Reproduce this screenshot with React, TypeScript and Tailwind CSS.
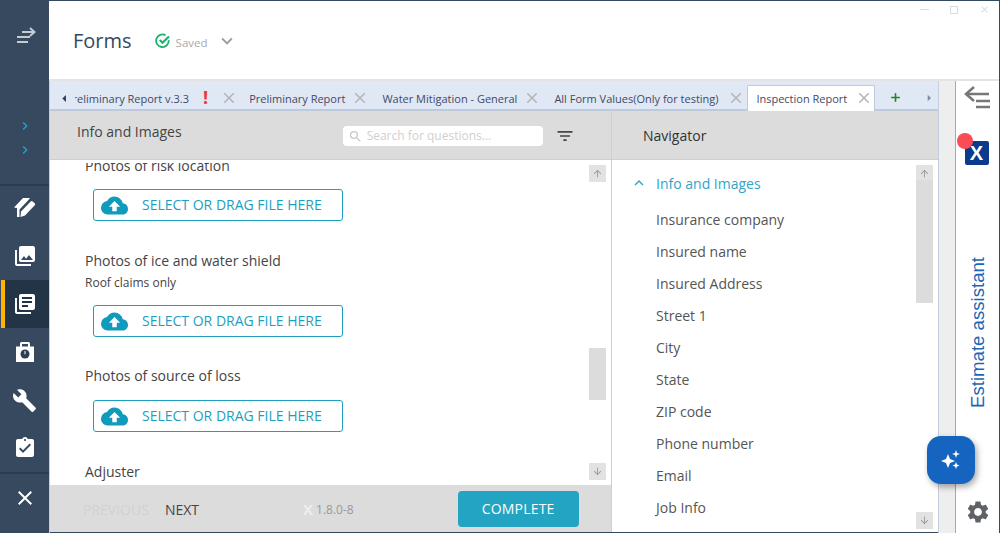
import { MdArrowDownward, MdArrowUpward, MdAssignmentTurnedIn, MdBuild, MdClose, MdCloudUpload, MdCollections, MdExpandLess, MdExpandMore, MdFilterList, MdLibraryBooks, MdSearch, MdSettings, MdChevronRight, MdArrowLeft, MdArrowRight } from 'react-icons/md';
import { Plus } from 'lucide-react';

const navItems = ['Insurance company', 'Insured name', 'Insured Address', 'Street 1', 'City', 'State', 'ZIP code', 'Phone number', 'Email', 'Job Info'];

function TabClose({ className }: { className?: string }) {
  return <MdClose size={18} className={'text-[#b5b5b5] -mt-[3px] shrink-0 ' + (className ?? 'ml-[6px]')} />;
}

function UploadBox() {
  return (
    <div className="ml-[8px] flex h-[32px] w-[250px] items-center rounded-[3px] border border-[#1c9fc0] text-[14px] text-[#1c9fc0]">
      <MdCloudUpload size={27} className="ml-[7px] text-[#109bbd]" />
      <span className="ml-[14px] -mt-[2px]">SELECT OR DRAG FILE HERE</span>
    </div>
  );
}

function Scrollbar({ top, height, bottom }: { top: number; height: number; bottom: number }) {
  return (
    <div className="relative mr-[5px] mt-[5px] w-[17px] shrink-0">
      <div className="flex h-[17px] items-center justify-center bg-[#e2e2e2] text-[#9a9a9a]"><MdArrowUpward size={11} /></div>
      <div className="absolute left-0 w-[17px] bg-[#dcdcdc]" style={{ top, height }} />
      <div className="absolute left-0 flex h-[17px] w-[17px] items-center justify-center bg-[#e2e2e2] text-[#9a9a9a]" style={{ top: bottom }}><MdArrowDownward size={11} /></div>
    </div>
  );
}

function SideIcon({ children, active }: { children: React.ReactNode; active?: boolean }) {
  return (
    <div className={active ? 'flex h-[48px] items-center justify-center border-l-[4px] border-[#ffb300] bg-[#233446] ml-[1px] pr-[5px] text-white' : 'flex h-[48px] items-center justify-center text-white'}>
      {children}
    </div>
  );
}

export default function App() {
  return (
    <div className="flex h-[533px] w-[1000px] overflow-hidden border-t border-r border-[#34495e] bg-white text-[#444] font-['Open_Sans',sans-serif]">
      {/* left rail */}
      <aside className="flex w-[49px] shrink-0 flex-col bg-[#36495e]">
        <div className="flex h-[66px] items-center justify-center">
          <svg width="22" height="18" viewBox="0 0 22 18" fill="none" stroke="#c3cbd3" strokeWidth="2">
            <path d="M3 12h13M3 17h11" />
            <path d="M8 7h12M16 3l4.5 4-4.5 4" />
          </svg>
        </div>
        <div className="mt-[51px] flex flex-col items-center gap-[8px] text-[#1fa8d1]">
          <MdChevronRight size={16} />
          <MdChevronRight size={16} />
        </div>
        <div className="mt-[26px] h-[2px] bg-[#2b3c4f]" />
        <div className="-mt-[2px] flex flex-col">
          <SideIcon>
            <svg width="24" height="24" viewBox="0 0 24 24" fill="#fff">
              <path d="M1 11.5 10 2h7l-2 2.5L6.5 13.5V21H4V12z" />
              <path d="M8 15.5 17.7 5.5a1.4 1.4 0 0 1 2 0l2 1.8a1.4 1.4 0 0 1 0 2L12 19.5 7.5 21z" />
            </svg>
          </SideIcon>
          <SideIcon><MdCollections size={24} /></SideIcon>
          <SideIcon active><MdLibraryBooks size={24} /></SideIcon>
          <SideIcon>
            <svg width="24" height="24" viewBox="0 0 24 24" fill="#fff">
              <path d="M7 7V3.5A1.5 1.5 0 0 1 8.5 2h7A1.5 1.5 0 0 1 17 3.5V7h-2V4H9v3z" />
              <rect x="3" y="6.5" width="18" height="15.5" />
              <circle cx="12" cy="14" r="4.5" fill="#2c3e50" />
              <path d="M11.5 11h1v3.2h-1z" fill="#fff" />
            </svg>
          </SideIcon>
          <SideIcon><MdBuild size={25} /></SideIcon>
          <SideIcon><MdAssignmentTurnedIn size={24} /></SideIcon>
        </div>
        <div className="h-[2px] bg-[#2b3c4f]" />
        <div className="flex h-[48px] items-center justify-center text-white"><MdClose size={24} /></div>
      </aside>

      <div className="flex min-w-0 flex-1 flex-col">
        {/* title bar */}
        <header className="relative flex h-[80px] shrink-0 items-center border-b-2 border-[#e4e4e4] pt-[2px] pl-[24px]">
          <h1 className="text-[20px] leading-none text-[#34495e]">Forms</h1>
          <svg className="ml-[23px]" width="16" height="16" viewBox="0 0 16 16" fill="none">
            <path d="M13.7 7.2A6.3 6.3 0 1 1 10.6 2.3" stroke="#19b26b" strokeWidth="1.8" />
            <path d="M4.8 7 7.5 9.8 14 3.5" stroke="#19b26b" strokeWidth="2.2" />
          </svg>
          <span className="ml-[5px] mt-[4px] text-[11.5px] text-[#aaa]">Saved</span>
          <MdExpandMore size={22} className="ml-[8px] text-[#9e9e9e]" />
          <div className="absolute right-[9px] top-[3px] flex items-center gap-[21px] text-[#d5dde4]">
            <div className="h-px w-[9px] bg-[#d5dde4]" />
            <div className="h-[8px] w-[8px] border border-[#d5dde4]" />
            <MdClose size={11} />
          </div>
        </header>

        <div className="flex min-h-0 flex-1">
          <div className="flex min-w-0 w-[890px] shrink-0 flex-col border-x border-[#c3cede]">
            {/* tab strip */}
            <div className="flex h-[30px] shrink-0 items-start border-b-2 border-[#bccadc] bg-[#dfe8f4] text-[11px] text-[#3f4a66]">
              <div className="flex h-[28px] w-[25px] shrink-0 items-center justify-end pr-[2px] pt-[6px] text-[#2c3e50]"><MdArrowLeft size={17} /></div>
              <div className="-mb-[2px] flex h-[30px] w-[845px] shrink-0 items-center overflow-hidden whitespace-nowrap">
                <div className="-ml-[9px] mt-[6px] flex shrink-0 items-center pr-[11px]">
                  <span>Preliminary Report v.3.3</span>
                  <span className="ml-[14px] -mt-[4px] text-[18px] font-bold leading-none text-[#f4362c]">!</span>
                  <TabClose className="ml-[12px]" />
                </div>
                <div className="mt-[6px] flex shrink-0 items-center pr-[13px]"><span>Preliminary Report</span><TabClose /></div>
                <div className="mt-[6px] flex shrink-0 items-center pr-[13px]"><span>Water Mitigation - General</span><TabClose /></div>
                <div className="mt-[6px] flex shrink-0 items-center pr-[2px]"><span className="w-[167px]">All Form Values(Only for testing)</span><TabClose /></div>
                <div className="mt-[4px] flex h-[26px] shrink-0 items-center rounded-t-[2px] border border-b-0 border-[#bccadc] bg-white pl-[8px] pr-[1px] pt-[1px]"><span>Inspection Report</span><TabClose className="ml-[8px]" /></div>
                <Plus size={13} strokeWidth={3} className="ml-[14px] mt-[2px] shrink-0 text-[#1e8c1e]" />
              </div>
              <div className="flex h-[28px] flex-1 items-center justify-center pt-[6px] text-[#7d8ea6]"><MdArrowRight size={16} /></div>
            </div>

            <div className="flex min-h-0 flex-1">
              {/* form panel */}
              <section className="flex w-[562px] shrink-0 flex-col border-r border-[#c9d0da]">
                <div className="flex h-[49px] shrink-0 items-start border-b border-[#c9d0da] bg-[#dcdcdc]">
                  <h2 className="ml-[27px] mt-[10px] text-[14px] text-[#444]">Info and Images</h2>
                  <div className="ml-[161px] mt-[15px] flex h-[20px] w-[200px] items-center rounded-[4px] bg-white pl-[5px] text-[12px] text-[#d0d0d0]">
                    <MdSearch size={15} className="text-[#c8c8c8]" />
                    <span className="ml-[4px]">Search for questions...</span>
                  </div>
                  <MdFilterList size={20} className="ml-[12px] mt-[15px] text-[#444]" />
                </div>
                <div className="relative flex min-h-0 flex-1 overflow-hidden">
                  <div className="absolute inset-x-0 top-0 h-[3px] bg-white" />
                  <div className="min-w-0 flex-1 pl-[35px] text-[14px] text-[#444]">
                    <div className="-mt-[4px] h-[20px] leading-[20px]">Photos of risk location</div>
                    <div className="mt-[13px]"><UploadBox /></div>
                    <div className="mt-[30px] h-[20px] leading-[20px]">Photos of ice and water shield</div>
                    <div className="mt-[4px] h-[16px] text-[12px] leading-[16px]">Roof claims only</div>
                    <div className="mt-[14px]"><UploadBox /></div>
                    <div className="mt-[29px] h-[20px] leading-[20px]">Photos of source of loss</div>
                    <div className="mt-[14px]"><UploadBox /></div>
                    <div className="mt-[30px] h-[20px] leading-[20px]">Adjuster</div>
                  </div>
                  <Scrollbar top={183} height={52} bottom={298} />
                </div>
                <div className="flex h-[47px] shrink-0 items-center bg-[#dcdcdc] text-[14px]">
                  <span className="ml-[33px] mt-[2px] text-[#d2d2d2]">PREVIOUS</span>
                  <span className="ml-[16px] mt-[2px] text-[#444]">NEXT</span>
                  <span className="ml-[104px] mt-[2px] text-[15px] font-bold leading-none text-[#eeeeee]">X</span>
                  <span className="ml-[3px] mt-[2px] text-[12px] text-[#999]">1.8.0-8</span>
                  <button className="ml-[104px] h-[36px] w-[121px] rounded-[4px] bg-[#22a4c2] text-[14px] tracking-[0.2px] text-white">COMPLETE</button>
                </div>
              </section>

              {/* navigator */}
              <section className="flex min-w-0 flex-1 flex-col">
                <div className="flex h-[49px] shrink-0 items-center border-b border-[#c9d0da] bg-[#dcdcdc] pl-[31px] text-[14px] text-[#333]">Navigator</div>
                <div className="flex min-h-0 flex-1 overflow-hidden">
                  <div className="min-w-0 flex-1 text-[14px] text-[#555]">
                    <div className="mt-[7px] flex h-[32px] items-center pl-[18px] text-[#2fa5c7]">
                      <MdExpandLess size={18} />
                      <span className="ml-[8px]">Info and Images</span>
                    </div>
                    <div className="mt-[4px]">
                      {navItems.map((item) => (
                        <div key={item} className="flex h-[32px] items-center pl-[44px]">{item}</div>
                      ))}
                    </div>
                  </div>
                  <Scrollbar top={15} height={123} bottom={347} />
                </div>
              </section>
            </div>
            <div className="h-px shrink-0 bg-[#34495e]" />
          </div>

          <div className="w-[16px] shrink-0 bg-[#eeeeee]" />

          {/* assistant rail */}
          <aside className="flex w-[45px] shrink-0 flex-col items-center border-l border-[#a8a8a8] bg-white">
            <svg className="mt-[4px] -ml-[3px]" width="28" height="24" viewBox="0 0 28 24" fill="none" stroke="#777" strokeWidth="2.5">
              <path d="M11 2 3 9l8 7" />
              <path d="M3 9h23M13 16h14M13 22h14" />
            </svg>
            <div className="mt-[32px] -ml-[3px] flex h-[24px] w-[24px] items-center justify-center rounded-[2px] bg-[#0c3a8c] font-['Liberation_Sans',sans-serif] text-[20px] font-bold leading-none text-white">X</div>
            <div className="mt-[92px] rotate-180 font-['Liberation_Sans',sans-serif] text-[18.6px] leading-none text-[#1a66b8] [writing-mode:vertical-rl]">Estimate assistant</div>
            <div className="mt-auto mb-[8px] -ml-[1px] text-[#5f6368]"><MdSettings size={26} /></div>
          </aside>
        </div>
      </div>

      {/* overlays */}
      <div className="absolute left-[957px] top-[133px] h-[16px] w-[16px] rounded-full bg-[#fb4b55]" />
      <div className="absolute left-[927px] top-[436px] flex h-[48px] w-[48px] items-center justify-center rounded-[14px] bg-[#1565c0] shadow-[2px_3px_6px_rgba(0,0,0,0.35)]">
        <svg width="22" height="22" viewBox="0 0 22 22" fill="#fff">
          <path d="M8 5 10 10 15 12 10 14 8 19 6 14 1 12 6 10z" />
          <path d="M16 1 17 4 20 5 17 6 16 9 15 6 12 5 15 4z" />
          <path d="M16 13 17 15.5 19.5 16.5 17 17.5 16 20 15 17.5 12.5 16.5 15 15.5z" />
        </svg>
      </div>
    </div>
  );
}
